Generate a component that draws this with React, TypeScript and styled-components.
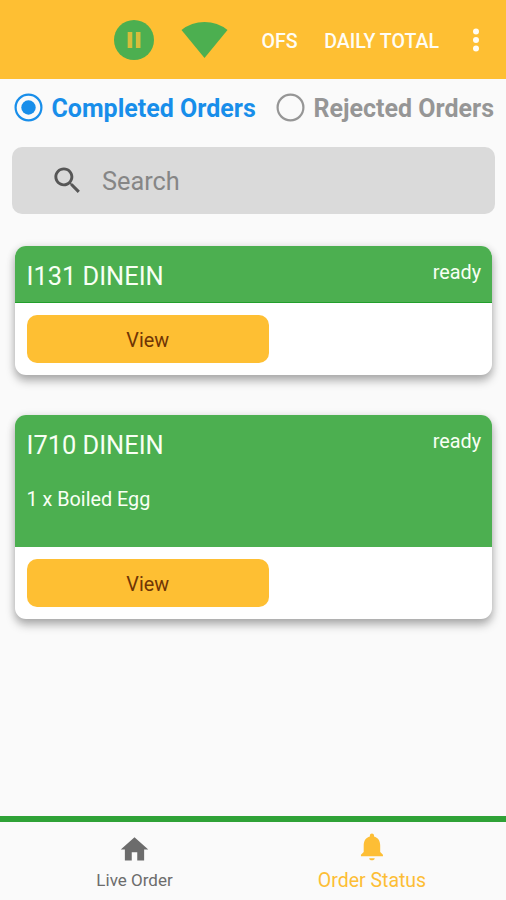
import React from "react";
import styled, { createGlobalStyle } from "styled-components";

const GlobalStyle = createGlobalStyle`
  * { box-sizing: border-box; }
  body { margin: 0; background: #fafafa; font-family: Roboto, sans-serif; }
  button { font: inherit; border: 0; padding: 0; background: none; }
`;

const Screen = styled.div`
  width: 506px;
  height: 900px;
  display: flex;
  flex-direction: column;
  overflow: hidden;
  background: #fafafa;
`;

const Toolbar = styled.header`
  height: 79px;
  flex: none;
  display: flex;
  align-items: center;
  padding: 1px 26px 0 114px;
  background: #febf33;
`;

const PauseIcon = styled.svg`
  width: 40px;
  height: 40px;
  margin-right: 27px;
`;

const SignalIcon = styled.svg`
  width: 47px;
  height: 38px;
  margin-right: 33.5px;
`;

const ToolbarAction = styled.button<{ $gap: number }>`
  color: #fffdf5;
  font-size: 19.6px;
  font-weight: 500;
  line-height: 24px;
  white-space: nowrap;
  margin-top: 3px;
  margin-right: ${(p) => p.$gap}px;
`;

const MoreIcon = styled.svg`
  width: 8px;
  height: 26px;
  margin-left: auto;
  flex: none;
`;

const Filters = styled.div`
  height: 57px;
  flex: none;
  display: flex;
  align-items: center;
  padding-left: 14px;
`;

const Filter = styled.label<{ $active?: boolean }>`
  display: flex;
  align-items: center;
  gap: 8.5px;
  width: ${(p) => (p.$active ? 262 : 222)}px;
  color: ${(p) => (p.$active ? "#188eea" : "#969696")};
  font-size: 25px;
  font-weight: 700;
  line-height: 30px;
  white-space: nowrap;

  svg {
    width: 29px;
    height: 29px;
    flex: none;
  }
`;

const FilterLabel = styled.span`
  padding-top: 2px;
`;

const SearchBox = styled.div`
  display: flex;
  align-items: center;
  flex: none;
  height: 67px;
  margin: 11px 11px 0 12px;
  padding: 2px 0 0 38px;
  border-radius: 10px;
  background: #dadada;
  color: #868686;
  font-size: 25.3px;
  line-height: 32px;

  svg {
    width: 35px;
    height: 35px;
    margin-right: 17px;
    margin-top: -2px;
  }
`;

const Orders = styled.main`
  flex: 1;
  display: flex;
  flex-direction: column;
  gap: 40px;
  padding: 32px 14px 0 15px;
`;

const Card = styled.article`
  border-radius: 11px;
  background: #fff;
  box-shadow: 0 6px 10px rgba(0, 0, 0, 0.28), 0 1px 9px rgba(0, 0, 0, 0.12);
`;

const CardHead = styled.div<{ $detailed: boolean }>`
  height: ${(p) => (p.$detailed ? 132 : 57)}px;
  padding: 14px 11px 0 11.5px;
  border-radius: 11px 11px 0 0;
  border-bottom: ${(p) => (p.$detailed ? 0 : 1)}px solid #229f2b;
  background: #4caf50;
  color: #f8fff4;
`;

const CardTitleRow = styled.div`
  display: flex;
  justify-content: space-between;
`;

const CardTitle = styled.h2`
  margin: 0;
  font-size: 25.4px;
  font-weight: 400;
  line-height: 32px;
`;

const Status = styled.span`
  font-size: 19.8px;
  line-height: 26px;
`;

const Item = styled.p`
  margin: 26px 0 0;
  font-size: 19.8px;
  line-height: 26px;
`;

const CardFoot = styled.div`
  height: 72px;
  padding: 11.5px;
`;

const ViewButton = styled.button`
  display: block;
  width: 242.5px;
  height: 48.5px;
  border-radius: 10px;
  background: #febf33;
  color: #6f3505;
  font-size: 19.8px;
  line-height: 51px;
`;

const BottomNav = styled.nav`
  display: grid;
  grid-template-columns: 269px 1fr;
  flex: none;
  height: 84px;
  border-top: 6px solid #2fa237;
`;

const Tab = styled.button<{ $active?: boolean }>`
  display: flex;
  flex-direction: column;
  align-items: center;
  padding-top: ${(p) => (p.$active ? 8 : 11)}px;
  padding-right: ${(p) => (p.$active ? 31 : 0)}px;
  color: ${(p) => (p.$active ? "#fdbe35" : "#6c6c6c")};
  font-size: ${(p) => (p.$active ? 19.5 : 17)}px;
  line-height: 24px;

  svg {
    width: 33px;
    height: 33px;
    fill: currentColor;
    margin-bottom: ${(p) => (p.$active ? 6 : 2)}px;
  }
`;

type Order = { id: string; items: string[]; status: string };

const orders: Order[] = [
  { id: "I131 DINEIN", items: [], status: "ready" },
  { id: "I710 DINEIN", items: ["1 x Boiled Egg"], status: "ready" },
];

function Radio({ checked }: { checked?: boolean }) {
  return (
    <svg viewBox="0 0 29 29">
      <circle cx="14.5" cy="14.5" r="12.9" fill="none" stroke="currentColor" strokeWidth="2.2" />
      {checked && <circle cx="14.5" cy="14.5" r="7.2" fill="currentColor" />}
    </svg>
  );
}

function OrderCard({ order }: { order: Order }) {
  return (
    <Card>
      <CardHead $detailed={order.items.length > 0}>
        <CardTitleRow>
          <CardTitle>{order.id}</CardTitle>
          <Status>{order.status}</Status>
        </CardTitleRow>
        {order.items.map((item) => (
          <Item key={item}>{item}</Item>
        ))}
      </CardHead>
      <CardFoot>
        <ViewButton>View</ViewButton>
      </CardFoot>
    </Card>
  );
}

export default function App() {
  return (
    <>
      <GlobalStyle />
      <Screen>
        <Toolbar>
          <PauseIcon viewBox="0 0 40 40">
            <circle cx="20" cy="20" r="20" fill="#4caf50" />
            <path d="M13.700 12h4.600v16h-4.600zM21.900 12h4.600v16h-4.600z" fill="#d6bd3b" />
          </PauseIcon>
          <SignalIcon viewBox="0 0 47 38">
            <path d="M0.500 9Q10.500 1 23.500 1T46.500 9L23.500 37Z" fill="#4caf50" />
          </SignalIcon>
          <ToolbarAction $gap={26.5}>OFS</ToolbarAction>
          <ToolbarAction $gap={0}>DAILY TOTAL</ToolbarAction>
          <MoreIcon viewBox="0 0 8 26" fill="#fffdf5">
            <circle cx="4" cy="4.500" r="3" />
            <circle cx="4" cy="13" r="3" />
            <circle cx="4" cy="21.500" r="3" />
          </MoreIcon>
        </Toolbar>
        <Filters>
          <Filter $active>
            <Radio checked />
            <FilterLabel>Completed Orders</FilterLabel>
          </Filter>
          <Filter>
            <Radio />
            <FilterLabel>Rejected Orders</FilterLabel>
          </Filter>
        </Filters>
        <SearchBox>
          <svg viewBox="0 0 24 24" fill="#565656">
            <path d="M15.500 14h-.79l-.28-.27C15.410 12.590 16 11.110 16 9.500 16 5.910 13.090 3 9.500 3S3 5.910 3 9.500 5.910 16 9.500 16c1.610 0 3.090-.59 4.230-1.570l.27.28v.79l5 4.990L20.490 19l-4.990-5zm-6 0C7.010 14 5 11.990 5 9.500S7.010 5 9.500 5 14 7.010 14 9.500 11.990 14 9.500 14z" />
          </svg>
          Search
        </SearchBox>
        <Orders>
          {orders.map((order) => (
            <OrderCard key={order.id} order={order} />
          ))}
        </Orders>
        <BottomNav>
          <Tab>
            <svg viewBox="0 0 24 24">
              <path d="M10 20v-6h4v6h5v-8h3L12 3 2 12h3v8z" />
            </svg>
            Live Order
          </Tab>
          <Tab $active>
            <svg viewBox="0 0 24 24">
              <path d="M11.600 22c1.100 0 2-.5 2-1.500h-4c0 1 .89 1.500 2 1.500zm6-6v-5c0-3.070-1.640-5.640-4.500-6.320V4c0-.83-.67-1.500-1.500-1.500s-1.500.67-1.500 1.500v.68C7.230 5.360 5.600 7.920 5.600 11v5l-2 2v1h16v-1l-2-2z" />
            </svg>
            Order Status
          </Tab>
        </BottomNav>
      </Screen>
    </>
  );
}
